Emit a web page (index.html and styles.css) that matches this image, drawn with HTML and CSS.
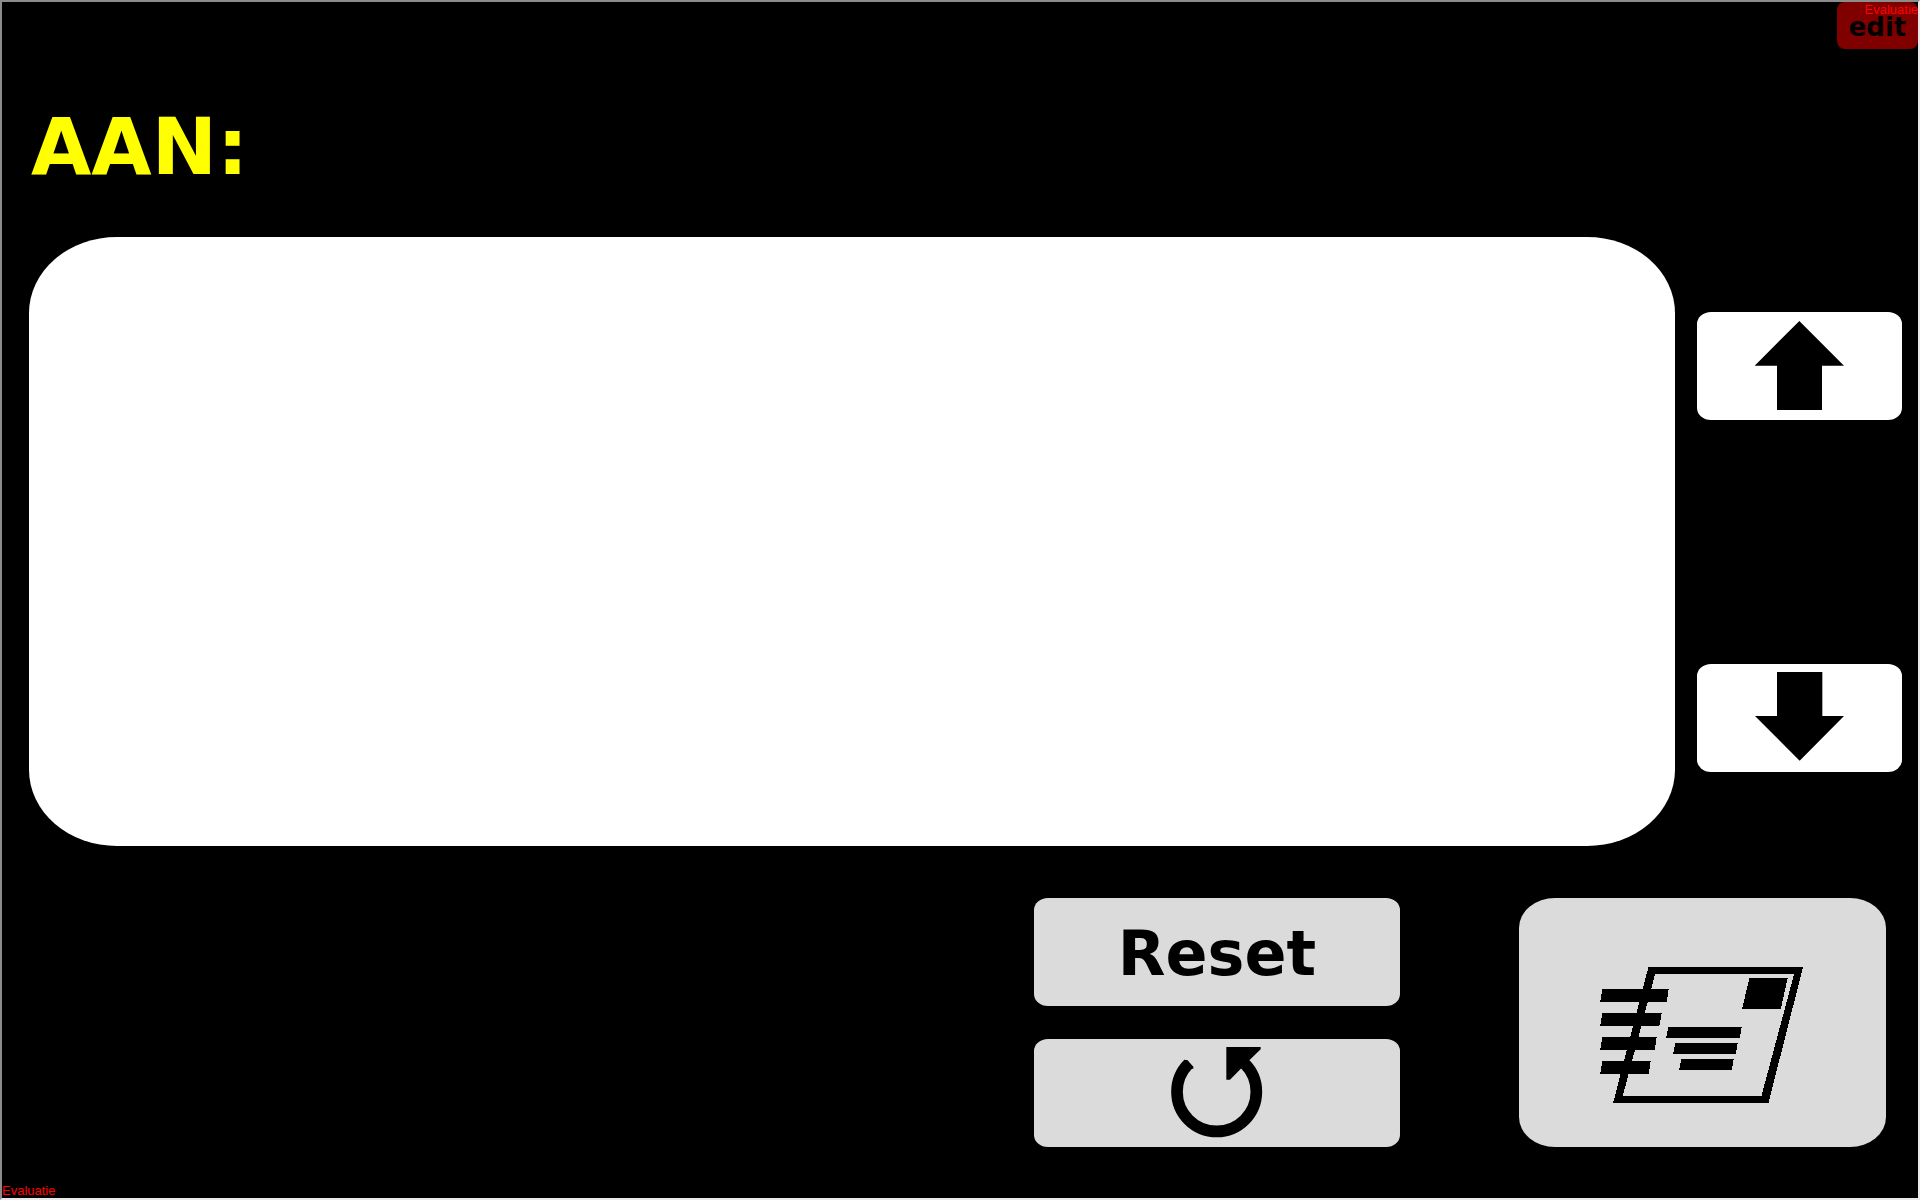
FILE: index.html
```html
<!DOCTYPE html>
<html lang="nl">
<head>
<meta charset="utf-8">
<meta name="viewport" content="width=device-width, initial-scale=1">
<title>Bericht</title>
<link rel="stylesheet" href="styles.css">
</head>
<body>
<main class="screen">
  <header class="topbar">
    <button class="edit" type="button">edit</button>
  </header>
  <h1 class="recipient"><label for="message">AAN:</label></h1>
  <section class="message-row">
    <textarea class="message" id="message"></textarea>
    <div class="scroll">
      <button class="key key-white" type="button" aria-label="Omhoog">
        <svg class="icon" viewBox="509 288 300 300" aria-hidden="true"><path d="M657 303 791 437H725V570H590V437H523Z"/></svg>
      </button>
      <button class="key key-white" type="button" aria-label="Omlaag">
        <svg class="icon" viewBox="330 84 300 300" aria-hidden="true"><path d="M411 96H547V228H612L479 362 345 228H411Z"/></svg>
      </button>
    </div>
  </section>
  <footer class="actions">
    <div class="stack">
      <button class="key reset" type="button">Reset</button>
      <button class="key" type="button" aria-label="Herstellen">
        <svg class="icon" viewBox="441 69 300 300" aria-hidden="true">
          <path d="M506 131A119 119 0 1 0 674 131" fill="none" stroke="#000" stroke-width="35"/>
          <path d="M493 120H502L520 140V146L508 146Z"/>
          <path d="M619 81H722V88L688 121 661 148 630 179H619Z"/>
        </svg>
      </button>
    </div>
    <button class="key send" type="button" aria-label="Verzenden">
      <svg class="icon-send" viewBox="-6 -37 690 510" aria-hidden="true">
        <path fill-rule="evenodd" d="M175 51H639L535 459H69ZM195 72 98 438H514L612 72Z"/>
        <path d="M37 117H236L230 156H30ZM37 189H215L208 228H30ZM37 261H200L194 300H30ZM37 333H182L176 372H30Z"/>
        <path d="M478 84H593L572 177H456ZM235 231H455L449 264H228ZM256 279H443L437 312H249ZM274 327H431L425 360H267Z"/>
      </svg>
    </button>
  </footer>
  <span class="mark mark-top">Evaluatie</span>
  <span class="mark mark-bottom">Evaluatie</span>
</main>
</body>
</html>
```
FILE: styles.css
```css
* {
  box-sizing: border-box;
}

body {
  margin: 0;
  background: #000;
  font-family: Verdana, "DejaVu Sans", sans-serif;
}

.screen {
  position: relative;
  display: flex;
  flex-direction: column;
  min-height: 100vh;
  border: 2px solid;
  border-color: #8c8c8c #e9e9e9 #e9e9e9 #8c8c8c;
  background: #000;
}

.topbar {
  display: flex;
  justify-content: flex-end;
}

.edit {
  width: 81px;
  height: 47px;
  padding: 2px 0 0;
  border: 0;
  border-radius: 8px;
  background: #800000;
  color: #000;
  font: bold 26px/30px Verdana, "DejaVu Sans", sans-serif;
}

.recipient {
  margin: 53px 29px 45px;
  color: #ff0;
  font-size: 78px;
  line-height: 90px;
}

.message-row {
  display: flex;
  flex: 1;
  gap: 22px;
  padding: 0 16px 0 27px;
}

.message {
  flex: 1;
  min-width: 0;
  min-height: 320px;
  padding: 40px;
  border: 0;
  border-radius: 88px / 76px;
  outline: 0;
  background: #fff;
  resize: none;
  font: bold 62px/76px Verdana, "DejaVu Sans", sans-serif;
}

.scroll {
  display: flex;
  flex-direction: column;
  justify-content: space-between;
  width: 205px;
  padding: 75px 0 74px;
}

.key {
  display: flex;
  align-items: center;
  justify-content: center;
  width: 100%;
  height: 108px;
  padding: 0;
  border: 0;
  border-radius: 14px / 12px;
  background: #dbdbdb;
  color: #000;
}

.key-white {
  background: #fff;
}

.icon {
  width: 100px;
  height: 100px;
}

.actions {
  display: flex;
  justify-content: flex-end;
  gap: 119px;
  padding: 52px 32px 51px;
}

.stack {
  display: flex;
  flex: 0 1 366px;
  flex-direction: column;
  gap: 33px;
}

.reset {
  padding-top: 4px;
  font: bold 62px/76px Verdana, "DejaVu Sans", sans-serif;
}

.send {
  flex: 0 1 367px;
  height: auto;
  border-radius: 36px / 30px;
}

.icon-send {
  width: 230px;
  height: 170px;
  shape-rendering: crispEdges;
}

.mark {
  position: absolute;
  color: #f00;
  font: 13px/15px Arial, "Liberation Sans", sans-serif;
  pointer-events: none;
}

.mark-top {
  top: 0;
  right: 0;
}

.mark-bottom {
  bottom: 0;
  left: 0;
}
```
